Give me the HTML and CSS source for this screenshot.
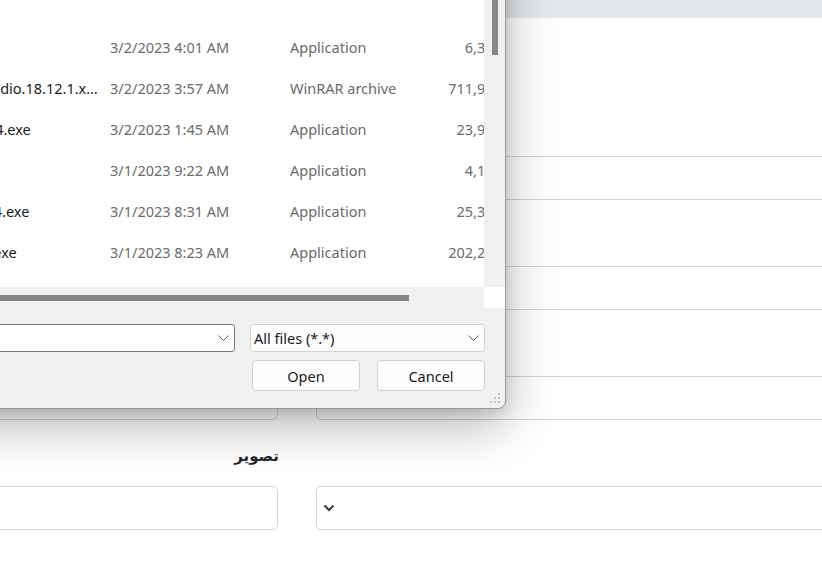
FILE: index.html
```html
<!DOCTYPE html>
<html lang="fa">
<head>
<meta charset="utf-8">
<title>Upload</title>
<link rel="stylesheet" href="styles.css">
</head>
<body>
<div class="page">
  <div class="card-head"></div>
  <form class="form" dir="rtl">
    <div class="field"><div class="label"></div><div class="input"></div></div>
    <div class="field"><div class="label"></div><div class="input"></div></div>
    <div class="field"><div class="label"></div><div class="input"></div></div>
    <div class="field"><div class="label"></div><div class="input"></div></div>
    <div class="field"><div class="label"></div><div class="input"></div></div>
    <div class="field"><div class="label"></div><div class="input"></div></div>
    <div class="field">
      <div class="label"></div>
      <div class="input select">
        <svg class="select-chev" width="12" height="8" viewBox="0 0 12 8"><path d="M1.5 1.5 L6 6 L10.5 1.5" fill="none" stroke="#343a40" stroke-width="2"/></svg>
      </div>
    </div>
    <div class="field"><label class="label">تصویر</label><div class="input"></div></div>
  </form>
</div>

<div class="dialog">
  <div class="browser">
    <div class="list-wrap">
      <div class="list">
        <div class="row"><span class="c-name">ChromeSetup.exe</span><span class="c-date">3/2/2023 4:01 AM</span><span class="c-type">Application</span><span class="c-size">6,338 KB</span></div>
        <div class="row"><span class="c-name">SSMS-Setup-ENU-Studio.18.12.1.x64.exe</span><span class="c-date">3/2/2023 3:57 AM</span><span class="c-type">WinRAR archive</span><span class="c-size">711,936 KB</span></div>
        <div class="row"><span class="c-name">python-3.11.2-amd64.exe</span><span class="c-date">3/2/2023 1:45 AM</span><span class="c-type">Application</span><span class="c-size">23,962 KB</span></div>
        <div class="row"><span class="c-name">rufus-3.22.exe</span><span class="c-date">3/1/2023 9:22 AM</span><span class="c-type">Application</span><span class="c-size">4,128 KB</span></div>
        <div class="row"><span class="c-name">npp.v8.5.Installer.x64.exe</span><span class="c-date">3/1/2023 8:31 AM</span><span class="c-type">Application</span><span class="c-size">25,344 KB</span></div>
        <div class="row"><span class="c-name">VisualStudioSetup1.exe</span><span class="c-date">3/1/2023 8:23 AM</span><span class="c-type">Application</span><span class="c-size">202,271 KB</span></div>
      </div>
      <div class="vscroll"><div class="vthumb"></div></div>
    </div>
    <div class="hscroll-row">
      <div class="hscroll"><div class="hthumb"></div></div>
      <div class="corner"></div>
    </div>
  </div>
  <div class="panel">
    <div class="combo-row">
      <div class="combo combo-name">
        <svg class="chev" width="11" height="7" viewBox="0 0 11 7"><path d="M0.5 0.5 L5.5 5.5 L10.5 0.5" fill="none" stroke="#606060" stroke-width="1"/></svg>
      </div>
      <div class="combo combo-filter">
        <span class="combo-text">All files (*.*)</span>
        <svg class="chev" width="11" height="7" viewBox="0 0 11 7"><path d="M0.5 0.5 L5.5 5.5 L10.5 0.5" fill="none" stroke="#606060" stroke-width="1"/></svg>
      </div>
    </div>
    <div class="btn-row">
      <button class="btn" type="button">Open</button>
      <button class="btn" type="button">Cancel</button>
    </div>
    <svg class="grip" width="12" height="12" viewBox="0 0 12 12">
      <rect x="8" y="0" width="2" height="2" fill="#c2c2c2"/>
      <rect x="4" y="4" width="2" height="2" fill="#c2c2c2"/>
      <rect x="8" y="4" width="2" height="2" fill="#c2c2c2"/>
      <rect x="0" y="8" width="2" height="2" fill="#c2c2c2"/>
      <rect x="4" y="8" width="2" height="2" fill="#c2c2c2"/>
      <rect x="8" y="8" width="2" height="2" fill="#c2c2c2"/>
    </svg>
  </div>
</div>
</body>
</html>
```

FILE: styles.css
```css
html, body {
  margin: 0;
  padding: 0;
  background: #ffffff;
  overflow: hidden;
  width: 822px;
  height: 568px;
}

.page {
  width: 822px;
  height: 568px;
  overflow: hidden;
}

.card-head {
  height: 18px;
  background: #e5e8eb;
}

.form {
  width: 1222px;
  margin-left: -200px;
  padding-top: 96px;
  display: grid;
  grid-template-columns: 706px 478px;
  column-gap: 38px;
  font-family: "DejaVu Sans", sans-serif;
}

.field {
  display: flex;
  flex-direction: column;
  height: 110px;
}

.label {
  display: block;
  height: 24px;
  line-height: 24px;
  margin-bottom: 18px;
  font-size: 15px;
  font-weight: bold;
  color: #212529;
  text-align: right;
  padding-right: 1px;
  margin-right: -2px;
}

.input {
  height: 44px;
  box-sizing: border-box;
  border: 1px solid #ced4da;
  border-radius: 5px;
  background: #ffffff;
}

.select {
  display: flex;
  align-items: center;
  justify-content: flex-end;
  padding-left: 6px;
}

.select-chev {
  display: block;
}

/* ---------- file dialog ---------- */
.dialog {
  position: absolute;
  left: -295px;
  top: -120px;
  width: 801px;
  height: 529px;
  box-sizing: border-box;
  border: 1px solid #9a9a9a;
  border-radius: 8px;
  background: #f0f0f0;
  box-shadow: 0 16px 50px rgba(0, 0, 0, 0.30), 0 3px 12px rgba(0, 0, 0, 0.12);
  display: flex;
  flex-direction: column;
  overflow: hidden;
  font-family: "Noto Sans", sans-serif;
}

.browser {
  height: 427px;
  display: flex;
  flex-direction: column;
}

.list-wrap {
  height: 406px;
  display: flex;
}

.list {
  width: 778px;
  background: #ffffff;
  overflow: hidden;
  padding-top: 145px;
  padding-left: 152px;
  box-sizing: border-box;
}

.row {
  display: grid;
  grid-template-columns: 252px 180px 150px 84px;
  height: 41px;
  align-items: center;
  font-size: 14.5px;
  white-space: nowrap;
}

.row span {
  overflow: hidden;
}

.c-name {
  color: #1b1b1b;
  text-overflow: ellipsis;
  padding-right: 10px;
}

.c-date, .c-type, .c-size {
  color: #6b6b6b;
}

.c-size {
  text-align: right;
  overflow: visible !important;
}

.vscroll {
  width: 21px;
  background: #f0f0f0;
}

.vthumb {
  margin-top: 40px;
  margin-left: 8px;
  width: 6px;
  height: 134px;
  background: #868686;
}

.hscroll-row {
  height: 21px;
  display: flex;
}

.hscroll {
  width: 778px;
  background: #f0f0f0;
}

.hthumb {
  margin-top: 8px;
  margin-left: 94px;
  width: 609px;
  height: 6px;
  background: #868686;
}

.corner {
  width: 21px;
  height: 21px;
  background: #ffffff;
}

.panel {
  position: relative;
  flex: 1;
  padding: 16px 20px 0 0;
  display: flex;
  flex-direction: column;
}

.combo-row {
  display: flex;
  gap: 15px;
  height: 28px;
}

.combo {
  box-sizing: border-box;
  height: 28px;
  border-radius: 3px;
  display: flex;
  align-items: center;
}

.combo-name {
  flex: 1;
  background: #ffffff;
  border: 1px solid #7a7a7a;
  justify-content: flex-end;
  padding-right: 5px;
}

.combo-filter {
  width: 235px;
  background: #fdfdfd;
  border: 1px solid #d4d4d4;
  justify-content: space-between;
  padding: 0 5px 0 3px;
}

.combo-text {
  font-size: 14.5px;
  color: #1a1a1a;
}

.chev {
  display: block;
}

.btn-row {
  display: flex;
  justify-content: flex-end;
  gap: 17px;
  margin-top: 8px;
}

.btn {
  width: 108px;
  height: 31px;
  box-sizing: border-box;
  border: 1px solid #d0d0d0;
  border-radius: 4px;
  background: #fdfdfd;
  font-family: "Noto Sans", sans-serif;
  font-size: 14.5px;
  color: #1a1a1a;
  padding: 0;
}

.grip {
  position: absolute;
  right: 3px;
  bottom: 3px;
}
```
